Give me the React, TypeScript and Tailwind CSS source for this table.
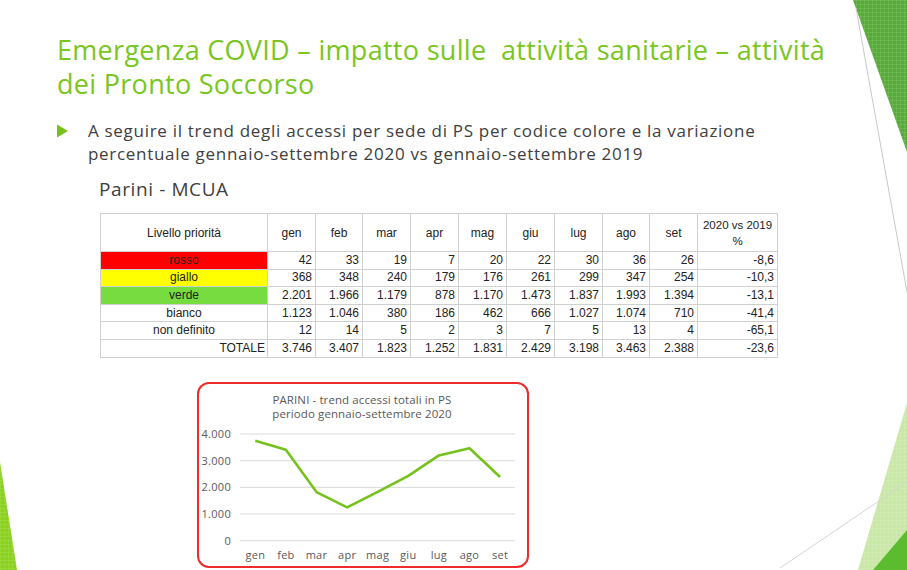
import React from "react";

const months = ["gen", "feb", "mar", "apr", "mag", "giu", "lug", "ago", "set"];
const rows: { label: string; bg: string; vals: string[]; pct: string; align?: string }[] = [
  { label: "rosso", bg: "bg-[#ff0000]", vals: ["42", "33", "19", "7", "20", "22", "30", "36", "26"], pct: "-8,6" },
  { label: "giallo", bg: "bg-[#ffff00]", vals: ["368", "348", "240", "179", "176", "261", "299", "347", "254"], pct: "-10,3" },
  { label: "verde", bg: "bg-[#77dc3f]", vals: ["2.201", "1.966", "1.179", "878", "1.170", "1.473", "1.837", "1.993", "1.394"], pct: "-13,1" },
  { label: "bianco", bg: "", vals: ["1.123", "1.046", "380", "186", "462", "666", "1.027", "1.074", "710"], pct: "-41,4" },
  { label: "non definito", bg: "", vals: ["12", "14", "5", "2", "3", "7", "5", "13", "4"], pct: "-65,1" },
  { label: "TOTALE", bg: "", vals: ["3.746", "3.407", "1.823", "1.252", "1.831", "2.429", "3.198", "3.463", "2.388"], pct: "-23,6", align: "right" },
];
const colW = [167, 48, 47, 48, 48, 48, 48, 48, 47, 48, 80];
const totals = [3746, 3407, 1823, 1252, 1831, 2429, 3198, 3463, 2388];

function Decor() {
  return (
    <svg className="absolute inset-0 pointer-events-none" width="907" height="570" viewBox="0 0 907 570">
      <defs>
        <pattern id="grid" width="4" height="4" patternUnits="userSpaceOnUse">
          <path d="M0 0H4M0 0V4" stroke="#ffffff" strokeOpacity="0.18" strokeWidth="1" />
        </pattern>
      </defs>
      <polygon points="853,0 907,0 907,152" fill="#58ab3a" />
      <polygon points="853,0 907,0 907,152" fill="url(#grid)" />
      <line x1="856" y1="8" x2="907" y2="292" stroke="#c8c8c8" strokeWidth="1" />
      <polygon points="858,570 907,403 907,570" fill="#c9e8a6" />
      <polygon points="858,570 907,403 907,570" fill="url(#grid)" />
      <polygon points="873,570 907,530 907,570" fill="#5cbb2e" />
      <line x1="780" y1="568" x2="907" y2="482" stroke="#d4d4d4" strokeWidth="1" />
      <polygon points="0,462 17,570 0,570" fill="#8ad21c" />
      <polygon points="0,462 17,570 0,570" fill="url(#grid)" />
    </svg>
  );
}

function Chart() {
  const x0 = 43;
  const step = 30.6;
  const yFor = (v: number) => 158.7 - (v / 1000) * 26.67;
  const pts = totals.map((v, i) => `${(x0 + step / 2 + step * i).toFixed(1)},${yFor(v).toFixed(1)}`).join(" ");
  return (
    <div className="ml-[140px] mt-[24px] w-[332px] h-[186px] rounded-[12px] border-2 border-[#ef2b2b] bg-white relative">
      <svg width="328" height="182" viewBox="2 2 328 182" className="block font-['Open_Sans',sans-serif]">
        <text x="165" y="22" textAnchor="middle" fontSize="11.5" letterSpacing="0.1" fill="#595959">PARINI - trend accessi totali in PS</text>
        <text x="165" y="35.5" textAnchor="middle" fontSize="11.5" letterSpacing="0.1" fill="#595959">periodo gennaio-settembre 2020</text>
        {[4, 3, 2, 1, 0].map((k) => (
          <g key={k}>
            <line x1={x0} x2={318} y1={yFor(k * 1000)} y2={yFor(k * 1000)} stroke="#d9d9d9" strokeWidth="1" />
            <text x="34" y={yFor(k * 1000) + 4} textAnchor="end" fontSize="11" letterSpacing="0.3" fill="#595959">
              {k === 0 ? "0" : `${k}.000`}
            </text>
          </g>
        ))}
        <polyline points={pts} fill="none" stroke="#76c21c" strokeWidth="2.6" strokeLinejoin="round" />
        {months.map((m, i) => (
          <text key={m} x={x0 + step / 2 + step * i} y="177" textAnchor="middle" fontSize="11" letterSpacing="0.3" fill="#595959">
            {m}
          </text>
        ))}
      </svg>
    </div>
  );
}

export default function App() {
  return (
    <div className="relative w-[907px] h-[570px] overflow-hidden bg-white">
      <Decor />
      <div className="relative pl-[57px] pt-[33px] font-['Open_Sans',sans-serif]">
        <h1 className="text-[27px] leading-[34px] text-[#78c61e] tracking-[0.3px] whitespace-nowrap">
          Emergenza COVID – impatto sulle&nbsp; attività sanitarie – attività
          <br />
          dei Pronto Soccorso
        </h1>
        <div className="mt-[18px] flex items-start">
          <svg width="31" height="23" viewBox="0 0 31 23" className="shrink-0">
            <polygon points="0,5.5 11,12 0,18.5" fill="#76c21c" />
          </svg>
          <p className="text-[17px] leading-[23px] text-[#404040] tracking-[0.7px] whitespace-nowrap">
            A seguire il trend degli accessi per sede di PS per codice colore e la variazione
            <br />
            percentuale gennaio-settembre 2020 vs gennaio-settembre 2019
          </p>
        </div>
        <div className="mt-[12px] pl-[42px] text-[19px] leading-[24px] text-[#404040] tracking-[0.6px]">Parini - MCUA</div>
        <table className="mt-[12px] ml-[43px] border-collapse table-fixed text-[12px] text-[#222] font-['Liberation_Sans',sans-serif]">
          <colgroup>
            {colW.map((w, i) => (
              <col key={i} style={{ width: w }} />
            ))}
          </colgroup>
          <thead>
            <tr className="h-[38px]">
              <th className="border border-[#d0d0d0] font-normal text-center">Livello priorità</th>
              {months.map((m) => (
                <th key={m} className="border border-[#d0d0d0] font-normal text-center">{m}</th>
              ))}
              <th className="border border-[#d0d0d0] font-normal text-center leading-[16px] text-[11.5px]">
                2020 vs 2019
                <br />%
              </th>
            </tr>
          </thead>
          <tbody>
            {rows.map((r) => (
              <tr key={r.label} className="h-[17.6px] leading-[15px]">
                <td
                  className={`border border-[#d0d0d0] ${r.bg} ${r.align === "right" ? "text-right pr-[2px]" : "text-center"}`}
                >
                  {r.label}
                </td>
                {r.vals.map((v, i) => (
                  <td key={i} className="border border-[#d0d0d0] text-right pr-[3px]">{v}</td>
                ))}
                <td className="border border-[#d0d0d0] text-right pr-[3px]">{r.pct}</td>
              </tr>
            ))}
          </tbody>
        </table>
        <Chart />
      </div>
    </div>
  );
}
